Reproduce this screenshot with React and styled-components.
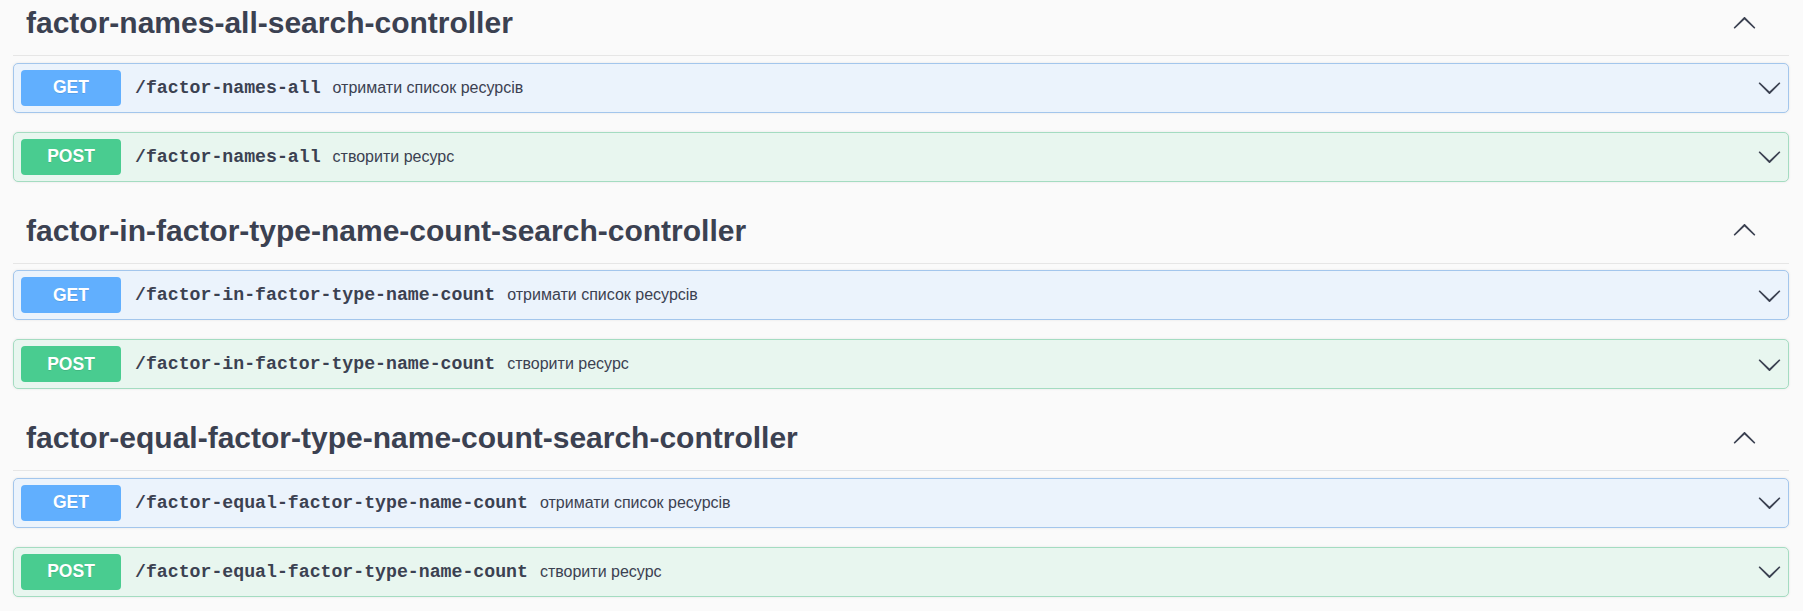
import styled, { createGlobalStyle } from 'styled-components';

const GlobalStyle = createGlobalStyle`
  html, body {
    margin: 0;
    padding: 0;
    background: #fafafa;
    font-family: "Liberation Sans", Arial, sans-serif;
    color: #3b4151;
    overflow: hidden;
  }
`;

const METHOD_COLORS = {
  GET: { main: '#61affe', bg: '#ebf3fc', border: '#a3c6ec' },
  POST: { main: '#49cc90', bg: '#e8f6ef', border: '#a4dcc1' },
};

const Page = styled.div`
  margin-top: -7px;
  padding: 0 14px 0 13px;
`;

const TagSection = styled.section`
  display: flex;
  flex-direction: column;
`;

const TagHeading = styled.h3`
  display: flex;
  align-items: center;
  justify-content: space-between;
  margin: 0 0 6.5px;
  padding: 11px 32px 13px 13px;
  border-bottom: 1px solid #e6e6e6;
  font-size: 30px;
  line-height: 38px;
  font-weight: 700;
  color: #3b4151;
`;

const Operation = styled.div`
  margin: 0 0 19px;
  border: 1px solid ${({ $method }) => METHOD_COLORS[$method].border};
  border-radius: 5px;
  background: ${({ $method }) => METHOD_COLORS[$method].bg};
  box-shadow: 0 0 3px rgba(0, 0, 0, 0.08);
`;

const Summary = styled.div`
  display: flex;
  align-items: center;
  padding: 6px 6px 6px 7px;
`;

const MethodBadge = styled.span`
  min-width: 100px;
  padding: 7.5px 0;
  border-radius: 4px;
  background: ${({ $method }) => METHOD_COLORS[$method].main};
  color: #fff;
  font-size: 17.5px;
  line-height: 21px;
  font-weight: 700;
  text-align: center;
  text-shadow: 0 1px 0 rgba(0, 0, 0, 0.1);
`;

const Path = styled.span`
  padding: 0 12px 0 14px;
  font-family: "Liberation Mono", "Courier New", monospace;
  font-size: 18.2px;
  font-weight: 700;
  color: #3b4151;
`;

const Description = styled.span`
  flex: 1;
  font-size: 16px;
  color: #3b4151;
`;

const ArrowIcon = styled.svg`
  width: 25px;
  height: 25px;
  flex: none;
  fill: #3b4151;
  transform: ${({ $up }) => ($up ? 'rotate(180deg)' : 'none')};
`;

function Arrow({ up }) {
  return (
    <ArrowIcon viewBox="0 0 20 20" $up={up} aria-hidden="true">
      <path d="M17.418 6.109c.272-.268.709-.268.979 0s.271.701 0 .969l-7.908 7.83c-.27.268-.707.268-.979 0l-7.908-7.83c-.27-.268-.27-.701 0-.969.271-.268.709-.268.979 0L10 13.25l7.418-7.141z" />
    </ArrowIcon>
  );
}

const sections = [
  { tag: 'factor-names-all-search-controller', path: '/factor-names-all' },
  { tag: 'factor-in-factor-type-name-count-search-controller', path: '/factor-in-factor-type-name-count' },
  { tag: 'factor-equal-factor-type-name-count-search-controller', path: '/factor-equal-factor-type-name-count' },
];

const operations = [
  { method: 'GET', text: 'отримати список ресурсів' },
  { method: 'POST', text: 'створити ресурс' },
];

export default function App() {
  return (
    <>
      <GlobalStyle />
      <Page>
        {sections.map(({ tag, path }) => (
          <TagSection key={tag}>
            <TagHeading>
              <span>{tag}</span>
              <Arrow up />
            </TagHeading>
            {operations.map(({ method, text }) => (
              <Operation key={method} $method={method}>
                <Summary>
                  <MethodBadge $method={method}>{method}</MethodBadge>
                  <Path>{path}</Path>
                  <Description>{text}</Description>
                  <Arrow />
                </Summary>
              </Operation>
            ))}
          </TagSection>
        ))}
      </Page>
    </>
  );
}
